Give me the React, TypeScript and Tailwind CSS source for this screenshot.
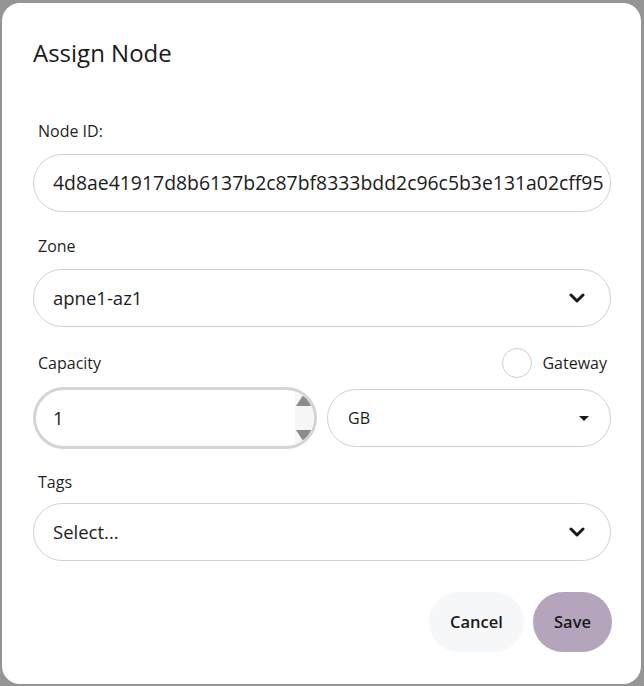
const font = { fontFamily: '"Open Sans", "Noto Sans", Arial, sans-serif' };

function Label({ text }: { text: string }) {
  return <div className="pl-[5px] text-[16px] leading-6 text-[#1f1f1f]">{text}</div>;
}

function Chevron() {
  return (
    <svg width="16" height="10" viewBox="0 0 16 10" fill="none">
      <polyline points="2,2 8,8 14,2" stroke="#1a1a1a" strokeWidth="3" strokeLinecap="round" strokeLinejoin="round" />
    </svg>
  );
}

function SelectBox({ value }: { value: string }) {
  return (
    <div className="flex h-[58px] items-center justify-between rounded-full border border-[#d2d2d2] pl-[19px] pr-[25px]">
      <span className="text-[18.5px] text-[#1c1c1c]">{value}</span>
      <Chevron />
    </div>
  );
}

export default function App() {
  return (
    <div className="h-[686px] w-[644px] bg-[#959595] pl-[2px] pt-[3px]" style={font}>
      <div className="flex h-[681px] w-[639px] flex-col rounded-[18px] bg-white pl-[31px] pr-[30px] pt-[34px]">
        <h2 className="text-[24px] leading-8 text-[#1a1a1a]">Assign Node</h2>

        <div className="mt-[50px] flex flex-col gap-[11px]">
          <Label text="Node ID:" />
          <div className="flex h-[58px] items-center overflow-hidden rounded-full border border-[#d2d2d2] pl-[19px] pr-[2px]">
            <span className="whitespace-nowrap text-[19.4px] text-[#1c1c1c]">
              4d8ae41917d8b6137b2c87bf8333bdd2c96c5b3e131a02cff95
            </span>
          </div>
        </div>

        <div className="mt-[22px] flex flex-col gap-[11px]">
          <Label text="Zone" />
          <SelectBox value="apne1-az1" />
        </div>

        <div className="mt-[21px] flex flex-col gap-[9px]">
          <div className="flex h-[30px] items-center justify-between pr-[4px]">
            <Label text="Capacity" />
            <div className="flex items-center gap-[10px]">
              <span className="h-[30px] w-[30px] rounded-full border border-[#cfcfcf]" />
              <span className="text-[16px] text-[#1f1f1f]">Gateway</span>
            </div>
          </div>
          <div className="grid grid-cols-2 items-center gap-[10px]">
            <div className="flex h-[62px] items-center justify-between overflow-hidden rounded-full border-[3px] border-[#d4d4d4] pl-[17px]">
              <span className="text-[18.5px] text-[#1c1c1c]">1</span>
              <div className="mr-[1px] flex h-full w-[18px] flex-col items-center justify-between bg-[#f7f7f7] py-[3px]">
                <svg width="17" height="13" viewBox="0 0 17 13">
                  <polygon points="8.5,0 17,13 0,13" fill="#8c8c8c" />
                </svg>
                <svg width="17" height="13" viewBox="0 0 17 13">
                  <polygon points="0,0 17,0 8.5,13" fill="#8c8c8c" />
                </svg>
              </div>
            </div>
            <div className="flex h-[58px] items-center justify-between rounded-full border border-[#d2d2d2] pl-[20px] pr-[21px]">
              <span className="text-[16px] text-[#1c1c1c]">GB</span>
              <svg width="10" height="5" viewBox="0 0 10 5">
                <polygon points="0,0 10,0 5,5" fill="#1a1a1a" />
              </svg>
            </div>
          </div>
        </div>

        <div className="mt-[21px] flex flex-col gap-[9px]">
          <Label text="Tags" />
          <SelectBox value="Select..." />
        </div>

        <div className="mt-[31px] flex justify-end gap-[9px]">
          <button className="h-[60px] w-[95px] rounded-full bg-[#f6f7f9] text-[16.5px] font-semibold text-[#1a1a1a]">
            Cancel
          </button>
          <button className="-mr-[1px] h-[60px] w-[79px] rounded-full bg-[#b4a5bc] text-[16.5px] font-semibold text-[#1a1a1a]">
            Save
          </button>
        </div>
      </div>
    </div>
  );
}
